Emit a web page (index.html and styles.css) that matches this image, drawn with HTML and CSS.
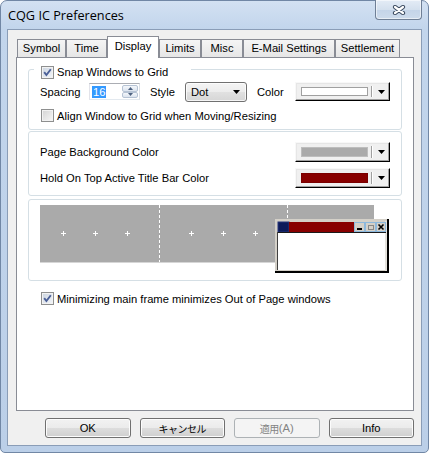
FILE: index.html
```html
<!DOCTYPE html>
<html lang="en">
<head>
<meta charset="utf-8">
<title>CQG IC Preferences</title>
<link rel="stylesheet" href="styles.css">
</head>
<body>
<div class="window">
  <div class="titlebar">
    <div class="title">CQG IC Preferences</div>
    <div class="close-btn">
      <svg width="14" height="10" viewBox="0 0 14 10">
        <path d="M3 2 L11 8 M11 2 L3 8" stroke="#3b4a60" stroke-width="4.2" stroke-linecap="round" fill="none"/>
        <path d="M3 2 L11 8 M11 2 L3 8" stroke="#ffffff" stroke-width="2.2" stroke-linecap="round" fill="none"/>
      </svg>
    </div>
  </div>
  <div class="client">
    <div class="tabs">
      <div class="tab w-symbol">Symbol</div>
      <div class="tab w-time">Time</div>
      <div class="tab active w-display">Display</div>
      <div class="tab w-limits">Limits</div>
      <div class="tab w-misc">Misc</div>
      <div class="tab w-email">E-Mail Settings</div>
      <div class="tab w-settle">Settlement</div>
    </div>
    <div class="panel">
      <div class="group g-snap">
        <div class="legend">
          <span class="cb checked"><svg width="11" height="11" viewBox="0 0 11 11"><path d="M2.2 5.2 L4.4 8 L8.8 2.2" stroke="#4a5f97" stroke-width="1.9" fill="none"/></svg></span>
          <span>Snap Windows to Grid</span>
        </div>
        <div class="spacing-row">
          <span class="lbl-spacing">Spacing</span>
          <div class="spin">
            <div class="spin-val"><span class="sel">16</span></div>
            <div class="spin-btns">
              <div class="spin-btn"><svg width="5" height="3" viewBox="0 0 5 3"><polygon points="0,3 5,3 2.5,0" fill="#4c607f"/></svg></div>
              <div class="spin-btn"><svg width="5" height="3" viewBox="0 0 5 3"><polygon points="0,0 5,0 2.5,3" fill="#4c607f"/></svg></div>
            </div>
          </div>
          <span class="lbl-style">Style</span>
          <div class="combo-dot">
            <span>Dot</span>
            <svg width="7" height="4" viewBox="0 0 7 4"><polygon points="0,0 7,0 3.5,4" fill="#000"/></svg>
          </div>
          <span class="lbl-color">Color</span>
          <div class="ccombo">
            <div class="sw sw-white"></div>
            <div class="sep"></div>
            <div class="arr"><svg width="7" height="4" viewBox="0 0 7 4"><polygon points="0,0 7,0 3.5,4" fill="#000"/></svg></div>
          </div>
        </div>
        <div class="check-row">
          <span class="cb"></span>
          <span>Align Window to Grid when Moving/Resizing</span>
        </div>
      </div>

      <div class="group g-colors">
        <div class="color-row">
          <span>Page Background Color</span>
          <div class="ccombo tall">
            <div class="sw sw-gray"></div>
            <div class="sep"></div>
            <div class="arr"><svg width="7" height="4" viewBox="0 0 7 4"><polygon points="0,0 7,0 3.5,4" fill="#000"/></svg></div>
          </div>
        </div>
        <div class="color-row">
          <span>Hold On Top Active Title Bar Color</span>
          <div class="ccombo tall">
            <div class="sw sw-red"></div>
            <div class="sep"></div>
            <div class="arr"><svg width="7" height="4" viewBox="0 0 7 4"><polygon points="0,0 7,0 3.5,4" fill="#000"/></svg></div>
          </div>
        </div>
      </div>

      <div class="group g-preview">
        <svg class="preview" width="349" height="68" viewBox="0 0 349 68">
          <rect x="0" y="0" width="334" height="57" fill="#aaaaaa"/>
          <rect x="0" y="57" width="334" height="1" fill="#d6d6d6"/>
          <line x1="119.5" y1="0" x2="119.5" y2="57" stroke="#ffffff" stroke-width="1" stroke-dasharray="3 2"/>
          <line x1="247.5" y1="0" x2="247.5" y2="57" stroke="#ffffff" stroke-width="1" stroke-dasharray="3 2"/>
          <g fill="#ffffff">
            <rect x="21" y="28" width="5" height="1"/><rect x="23" y="26" width="1" height="5"/>
            <rect x="53" y="28" width="5" height="1"/><rect x="55" y="26" width="1" height="5"/>
            <rect x="85" y="28" width="5" height="1"/><rect x="87" y="26" width="1" height="5"/>
            <rect x="149" y="28" width="5" height="1"/><rect x="151" y="26" width="1" height="5"/>
            <rect x="181" y="28" width="5" height="1"/><rect x="183" y="26" width="1" height="5"/>
            <rect x="213" y="28" width="5" height="1"/><rect x="215" y="26" width="1" height="5"/>
          </g>
          <g transform="translate(235,14)">
            <rect x="0" y="0" width="114" height="54" fill="#d4d0c8"/>
            <rect x="112" y="0" width="2" height="54" fill="#000000"/>
            <rect x="0" y="52" width="114" height="2" fill="#000000"/>
            <rect x="110" y="2" width="2" height="50" fill="#e4e2dc"/>
            <rect x="3" y="3" width="11" height="10" fill="#0c1a5a" stroke="#25357a" stroke-width="1"/>
            <rect x="14" y="3" width="65" height="10" fill="#880000"/>
            <rect x="79" y="3" width="32" height="10" fill="#a9cbe6"/>
            <rect x="79.5" y="3.5" width="10" height="9" fill="#d4d0c8" stroke="#8db8dc"/>
            <rect x="90.5" y="3.5" width="10" height="9" fill="#d4d0c8" stroke="#8db8dc"/>
            <rect x="101.5" y="3.5" width="9" height="9" fill="#d4d0c8" stroke="#8db8dc"/>
            <rect x="82" y="9" width="5" height="2" fill="#000"/>
            <rect x="93.5" y="6.5" width="5" height="4" fill="none" stroke="#888" stroke-width="1"/>
            <path d="M103.5 5.5 L108.5 10.5 M108.5 5.5 L103.5 10.5" stroke="#000" stroke-width="1.6"/>
            <rect x="2" y="13" width="109" height="1" fill="#1a1a1a"/>
            <rect x="2" y="13" width="1" height="38" fill="#404040"/>
            <rect x="3" y="14" width="107" height="37" fill="#ffffff"/>
          </g>
        </svg>
      </div>

      <div class="check-row bottom-check">
        <span class="cb checked"><svg width="11" height="11" viewBox="0 0 11 11"><path d="M2.2 5.2 L4.4 8 L8.8 2.2" stroke="#4a5f97" stroke-width="1.9" fill="none"/></svg></span>
        <span>Minimizing main frame minimizes Out of Page windows</span>
      </div>
    </div>
    <div class="buttons">
      <div class="btn">OK</div>
      <div class="btn"><span class="jp">キャンセル</span></div>
      <div class="btn disabled"><span class="jp">適用</span>(A)</div>
      <div class="btn">Info</div>
    </div>
  </div>
</div>
</body>
</html>
```

FILE: styles.css
```css
* { box-sizing: border-box; }
html, body { margin: 0; padding: 0; background: #ffffff; }
body {
  width: 429px;
  height: 453px;
  overflow: hidden;
  font-family: "Liberation Sans", "Noto Sans CJK JP", sans-serif;
  font-size: 11.2px;
  color: #000;
}
.window {
  width: 429px;
  height: 453px;
  display: flex;
  flex-direction: column;
  padding: 0 6px 6px 6px;
  border: 1px solid #7187a5;
  border-radius: 7px 7px 5px 5px;
  background: linear-gradient(180deg, #d3e1f2 0px, #c2d5ec 28px, #bbcfe8 100%);
}
.titlebar {
  height: 28px;
  flex: none;
  display: flex;
  justify-content: space-between;
  align-items: flex-start;
}
.title {
  font-family: "Open Sans", sans-serif;
  font-size: 12.7px;
  line-height: 18px;
  margin: 5px 0 0 1px;
  color: #000;
}
.close-btn {
  width: 47px;
  height: 20px;
  margin-top: -1px;
  border: 1px solid #6f7f96;
  border-top: none;
  border-radius: 0 0 4px 4px;
  background: linear-gradient(180deg, #e4ecf6 0%, #d4e0ee 50%, #c4d4e8 51%, #cddbec 100%);
  box-shadow: inset 0 0 0 1px rgba(255, 255, 255, 0.55);
  display: flex;
  align-items: center;
  justify-content: center;
}
.client {
  flex: 1;
  display: flex;
  flex-direction: column;
  background: #f0f0f0;
  border: 1px solid #8a9db7;
  padding: 0 7px 7px 8px;
}
.tabs {
  flex: none;
  display: flex;
  align-items: flex-end;
  height: 21px;
  margin-top: 6px;
  padding-left: 1px;
}
.tab {
  flex: none;
  height: 18px;
  border: 1px solid #898c95;
  border-bottom: none;
  background: linear-gradient(180deg, #f5f5f5 0%, #e6e6e6 100%);
  text-align: center;
  line-height: 17px;
  white-space: nowrap;
}
.tab.active {
  height: 22px;
  margin-bottom: -1px;
  background: #ffffff;
  position: relative;
  z-index: 1;
  line-height: 18px;
  padding-bottom: 3px;
}
.w-symbol { width: 49px; }
.w-time { width: 41px; }
.w-display { width: 52px; }
.w-limits { width: 42px; }
.w-misc { width: 42px; }
.w-email { width: 92px; }
.w-settle { width: 65px; }
.panel {
  flex: none;
  height: 354px;
  background: #ffffff;
  border: 1px solid #898c95;
  padding: 11px 11px 0 11px;
}
.group {
  border: 1px solid #d5dfe5;
  border-radius: 3px;
}
.g-snap { padding: 0 11px 6px 11px; }
.legend {
  display: flex;
  align-items: center;
  gap: 3px;
  width: 157px;
  height: 14px;
  margin: -5px 0 0 -6px;
  padding-left: 7px;
  background: #ffffff;
  white-space: nowrap;
}
.cb {
  flex: none;
  width: 13px;
  height: 13px;
  border: 1px solid #8e8f8f;
  background: linear-gradient(135deg, #d3d3d3 0%, #f7f7f7 100%);
  box-shadow: inset 0 0 0 1px #f2f2f2;
  display: flex;
  align-items: center;
  justify-content: center;
}
.cb.checked { background: linear-gradient(135deg, #cbd4e0 0%, #f4f6f9 100%); }
.cb svg { display: block; }
.spacing-row {
  display: flex;
  align-items: center;
  height: 21px;
  margin-top: 2px;
  white-space: nowrap;
}
.lbl-spacing { width: 49px; }
.lbl-style { width: 35px; margin-left: 10px; }
.lbl-color { width: 38px; margin-left: 10px; }
.spin {
  width: 51px;
  height: 17px;
  display: flex;
  padding: 1px;
  background: #ffffff;
  border: 1px solid;
  border-color: #abadb3 #dbdfe6 #e3e9ef #e2e3ea;
}
.spin-val {
  flex: 1;
  display: flex;
  align-items: center;
  padding-left: 1px;
}
.sel {
  background: #3399ff;
  color: #ffffff;
  padding: 0 1px;
  line-height: 12px;
}
.spin-btns {
  width: 16px;
  display: flex;
  flex-direction: column;
}
.spin-btn {
  flex: 1;
  border: 1px solid #b6c3d4;
  border-radius: 2px;
  background: linear-gradient(180deg, #f4f7fb 0%, #dbe3ee 100%);
  display: flex;
  align-items: center;
  justify-content: center;
}
.spin-btn svg { display: block; }
.combo-dot {
  width: 62px;
  height: 20px;
  border: 1px solid #707070;
  border-radius: 3px;
  background: linear-gradient(180deg, #f4f4f4 0%, #ececec 50%, #e1e1e1 51%, #d6d6d6 100%);
  box-shadow: inset 0 0 0 1px rgba(255, 255, 255, 0.75);
  display: flex;
  align-items: center;
  justify-content: space-between;
  padding: 0 6px 0 5px;
}
.combo-dot svg { display: block; }
.ccombo {
  width: 95px;
  height: 19px;
  flex: none;
  display: flex;
  border: 1px solid;
  border-color: #f8f8f8 #000000 #000000 #f8f8f8;
  box-shadow: inset -1px -1px 0 #a0a0a0, inset 1px 1px 0 #e6e6e6;
  background: #f0f0f0;
  padding: 4px 0 4px 5px;
}
.ccombo.tall { height: 20px; }
.sw { flex: 1; border: 1px solid #a0a0a0; }
.sw-white { background: #ffffff; }
.sw-gray { background: #aaaaaa; border-color: #bdbdbd; }
.sw-red { background: #880000; border-color: #7a0000; }
.sep {
  width: 2px;
  margin: -1px 0 -1px 3px;
  border-left: 1px solid #a0a0a0;
  border-right: 1px solid #ffffff;
}
.arr {
  width: 16px;
  display: flex;
  align-items: center;
  justify-content: center;
}
.arr svg { display: block; }
.check-row {
  display: flex;
  align-items: center;
  gap: 3px;
  height: 15px;
  margin-top: 6px;
  margin-left: 1px;
  white-space: nowrap;
}
.g-colors {
  margin-top: 1px;
  padding: 10px 11px 7px 11px;
  display: flex;
  flex-direction: column;
  gap: 6px;
}
.color-row {
  display: flex;
  justify-content: space-between;
  align-items: center;
  height: 20px;
}
.g-preview {
  margin-top: 3px;
  padding: 5px 11px 7px 11px;
}
.preview { display: block; }
.bottom-check {
  margin-top: 11px;
  margin-left: 13px;
  height: 13px;
}
.buttons {
  flex: none;
  display: flex;
  gap: 9px;
  height: 20px;
  margin-top: 7px;
  padding-left: 29px;
}
.btn {
  width: 86px;
  height: 20px;
  border: 1px solid #707070;
  border-radius: 3px;
  background: linear-gradient(180deg, #f2f2f2 0%, #ebebeb 50%, #dddddd 50%, #cfcfcf 100%);
  box-shadow: inset 0 0 0 1px #fcfcfc;
  display: flex;
  align-items: center;
  justify-content: center;
}
.btn.disabled {
  border-color: #adb2b5;
  background: #f4f4f4;
  color: #838383;
  box-shadow: none;
}
.jp {
  font-family: "Noto Sans CJK JP", sans-serif;
  font-size: 10px;
  letter-spacing: -0.5px;
}
```
